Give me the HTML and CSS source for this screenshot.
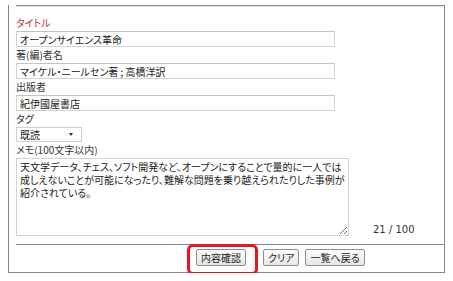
FILE: index.html
```html
<!DOCTYPE html>
<html lang="ja">
<head>
  <meta charset="UTF-8">
  <title>書籍登録</title>
  <link rel="stylesheet" href="styles.css">
</head>
<body>

  <div class="frame">
    <div class="rule"></div>
    <div class="fields">
      <div class="label required">タイトル</div>
      <input type="text" class="text" value="オープンサイエンス革命">

      <div class="label">著(編)者名</div>
      <input type="text" class="text" value="マイケル・ニールセン著 ; 高橋洋訳">

      <div class="label">出版者</div>
      <input type="text" class="text" value="紀伊國屋書店">

      <div class="label">タグ</div>
      <div class="select">既読<span class="arrow"></span></div>

      <div class="label">メモ(100文字以内)</div>
      <div class="memo-row">
        <textarea class="memo">天文学データ、チェス、ソフト開発など、オープンにすることで量的に一人では
成しえないことが可能になったり、難解な問題を乗り越えられたりした事例が
紹介されている。</textarea>
        <span class="count">21 / 100</span>
      </div>
    </div>
    <div class="rule sep"></div>
    <div class="actions">
      <span class="focus"><button class="btn">内容確認</button></span>
      <button class="btn">クリア</button>
      <button class="btn">一覧へ戻る</button>
    </div>
  </div>

</body>
</html>
```

FILE: styles.css
```css
body {
  margin: 0;
  background: #fff;
  font-family: "Noto Sans CJK JP", sans-serif;
  font-size: 10px;
  color: #333;
  font-feature-settings: "palt";
}

.frame {
  margin: 5px 0 0 8px;
  width: 437px;
  height: 268px;
  box-sizing: border-box;
  border: 1px solid #858585;
  border-top: none;
}

.rule {
  margin-left: 7px;
  border-top: 1px solid #8a8a8a;
  box-shadow: 0 1px 0 #e2e2e2;
}

.fields {
  padding: 9px 0 0 7px;
}

.label {
  height: 16px;
  line-height: 16px;
}

.required {
  color: #b3343c;
}

.text {
  display: block;
  width: 319px;
  height: 16px;
  margin: 0;
  padding: 0 3px;
  box-sizing: border-box;
  border: 1px solid #d2d2d2;
  border-top-color: #c4c4c4;
  font-family: inherit;
  font-size: 10px;
  font-feature-settings: "palt";
  color: #222;
  outline: none;
}

.select {
  position: relative;
  width: 66px;
  height: 15px;
  box-sizing: border-box;
  border: 1px solid #cfcfcf;
  padding-left: 3px;
  line-height: 13px;
  color: #222;
}

.arrow {
  position: absolute;
  right: 8px;
  top: 5px;
  border-left: 2px solid transparent;
  border-right: 2px solid transparent;
  border-top: 3px solid #333;
}

.memo-row {
  display: flex;
  align-items: flex-end;
  height: 78px;
}

.memo {
  display: block;
  width: 333px;
  height: 78px;
  margin: 0;
  padding: 1px 3px;
  box-sizing: border-box;
  border: 1px solid #d2d2d2;
  font-family: inherit;
  font-size: 10px;
  line-height: 13px;
  font-feature-settings: "palt";
  color: #222;
  resize: both;
  overflow: hidden;
  outline: none;
}

.count {
  margin: 0 0 1px 24px;
  font-family: "DejaVu Sans", sans-serif;
  font-size: 10px;
  color: #333;
}

.sep {
  margin-top: 8px;
  box-shadow: none;
}

.actions {
  display: flex;
  padding: 4px 0 0 187px;
}

.focus {
  position: relative;
  margin-right: 11px;
}

.focus::after {
  content: "";
  position: absolute;
  left: -9px;
  top: -5px;
  right: -6px;
  bottom: -9px;
  border: 3px solid #e4161e;
  border-radius: 6px;
}

.btn {
  height: 17px;
  margin: 0 6px 0 0;
  padding: 0 4px;
  border: 1px solid #8e8e8e;
  border-radius: 2px;
  background: linear-gradient(#fdfdfd, #e6e6e6);
  font-family: inherit;
  font-size: 10px;
  font-feature-settings: "palt";
  line-height: 15px;
  color: #222;
}
```
